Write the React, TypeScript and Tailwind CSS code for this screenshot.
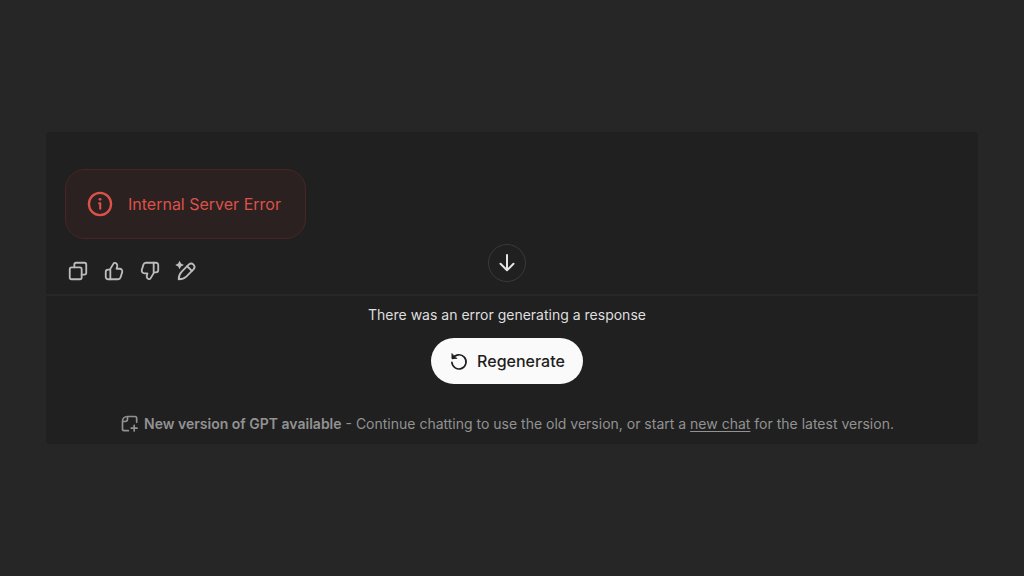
import type { ReactNode } from "react";

type IconProps = {
  className?: string;
  strokeWidth?: number;
  children: ReactNode;
};

function Icon({ className, strokeWidth = 2, children }: IconProps) {
  return (
    <svg
      viewBox="0 0 24 24"
      fill="none"
      stroke="currentColor"
      strokeWidth={strokeWidth}
      strokeLinecap="round"
      strokeLinejoin="round"
      aria-hidden="true"
      className={className}
    >
      {children}
    </svg>
  );
}

const thumb = (
  <>
    <path d="M7.5 10.5 11.6 3.7C11.9 3.2 12.4 3 13 3.1c1.8.3 2.9 1.9 2.5 3.7L14.8 9.5h3.3c2 0 3.4 1.9 2.8 3.8l-1.7 5.6C18.8 20.2 17.7 21 16.4 21H5.5A2.5 2.5 0 0 1 3 18.5V13a2.5 2.5 0 0 1 2.5-2.5z" />
    <path d="M8 10.5V21" />
  </>
);

const actions = [
  {
    label: "Copy",
    icon: (
      <>
        <rect x="3" y="8" width="13" height="13" rx="2" />
        <path d="M8 8V5a2 2 0 0 1 2-2h9a2 2 0 0 1 2 2v9a2 2 0 0 1-2 2h-3" />
      </>
    ),
  },
  { label: "Good response", icon: thumb },
  { label: "Bad response", icon: <g transform="rotate(180 12 12)">{thumb}</g> },
  {
    label: "Edit response",
    icon: (
      <>
        <path d="M7.6 12.4 15.2 4.8a3.7 3.7 0 0 1 5.2 5.2L12.3 18.100C10.300 20.100 7.800 21 4 21c0-3.800 1.300-6.300 3.600-8.600z" />
        <path d="m13.300 6.800 5.100 5.100" />
        <path
          d="M5 .8 6.600 3.900 9.700 5.500 6.600 7.100 5 10.200 3.400 7.100.3 5.500 3.400 3.900z"
          fill="currentColor"
          stroke="none"
        />
      </>
    ),
  },
];

function ErrorMessage() {
  return (
    <div
      role="alert"
      className="flex h-[70px] w-fit items-center gap-3.5 rounded-[20px] border border-[#4b2525] bg-[#2b2120] pr-6 pl-5 text-[#dc5149]"
    >
      <Icon className="size-7">
        <circle cx="12" cy="12" r="9.5" />
        <path d="M11.3 11.5h.9V16" strokeWidth={1.8} />
        <circle cx="12" cy="8" r="1.2" fill="currentColor" stroke="none" />
      </Icon>
      <p className="text-[16px]">Internal Server Error</p>
    </div>
  );
}

function App() {
  return (
    <div className="flex min-h-screen flex-col bg-[#262626] px-[46px] pt-[132px] font-['Inter','Liberation_Sans',sans-serif]">
      <main className="rounded-sm bg-[#202020]">
        <section className="relative px-[19px] pt-[37px] pb-3">
          <ErrorMessage />
          <div className="mt-[21px] flex gap-3.5 pl-0.5 text-[#bcbcbc]">
            {actions.map((action) => (
              <button key={action.label} type="button" aria-label={action.label}>
                <Icon className="size-[22px]">{action.icon}</Icon>
              </button>
            ))}
          </div>
          <div className="absolute inset-x-0 bottom-3 flex justify-center pr-2.5">
            <button
              type="button"
              aria-label="Scroll to bottom"
              className="flex size-[38px] items-center justify-center rounded-full border border-[#3a3a3a] text-[#e4e4e4]"
            >
              <Icon className="size-6">
                <path d="M12 4v15M5.5 12.8l6.5 6.5 6.5-6.5" />
              </Icon>
            </button>
          </div>
        </section>

        <section className="flex flex-col items-center border-t-2 border-[#272727] pt-[7px] pr-2.5 pb-2">
          <p className="text-[14px] leading-6 text-[#dfdfdf]">
            There was an error generating a response
          </p>
          <button
            type="button"
            className="mt-[11px] flex h-[46px] items-center gap-2 rounded-full bg-[#fafafa] px-[18px] text-[16px] font-medium text-[#1e1e1e]"
          >
            <Icon className="size-5">
              <path d="M3.5 3.5V9H9z" fill="currentColor" strokeWidth={1} />
              <path d="M4.500 9a8.500 8.500 0 1 1-1 4.500" />
            </Icon>
            Regenerate
          </button>
          <div className="mt-7 flex items-center gap-1 text-[14px] leading-6 text-[#929292]">
            <Icon className="size-5">
              <path d="M20 10V5a2 2 0 0 0-2-2H9C5.5 3 3 5.5 3 9v9a2 2 0 0 0 2 2h5" />
              <path d="M3.5 9H6a3 3 0 0 0 3-3V3.5" />
              <path d="M17 13.5v7M13.5 17h7" />
            </Icon>
            <p>
              <strong className="font-semibold">New version of GPT available</strong> - Continue
              chatting to use the old version, or start a{" "}
              <a href="#new-chat" className="underline underline-offset-2">
                new chat
              </a>{" "}
              for the latest version.
            </p>
          </div>
        </section>
      </main>
    </div>
  );
}

export default App;
